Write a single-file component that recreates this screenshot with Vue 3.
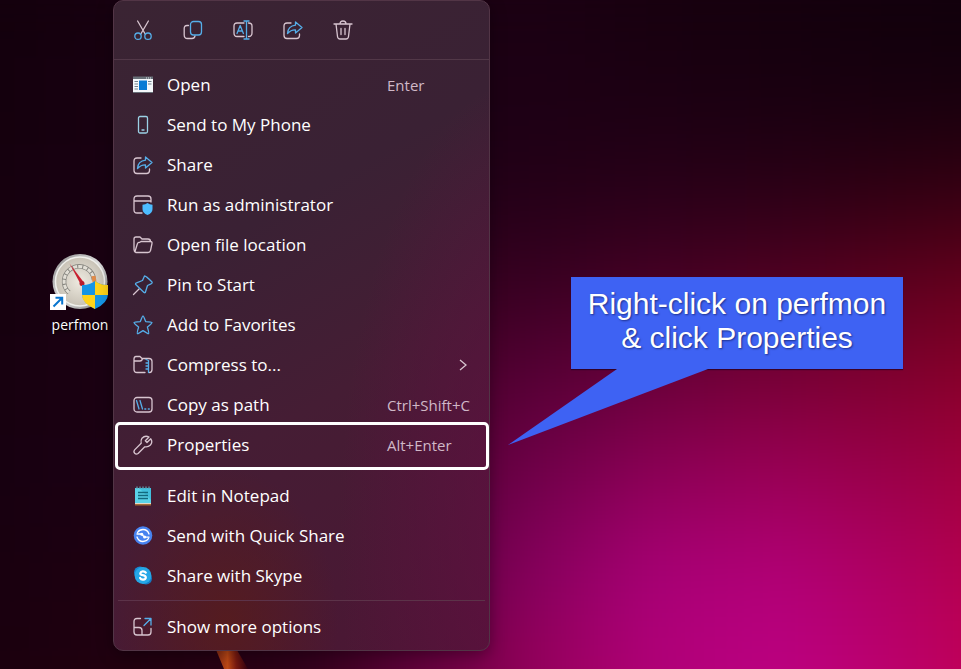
<script setup>
const tools = [
  { id: 'cut', label: 'Cut' },
  { id: 'copy', label: 'Copy' },
  { id: 'rename', label: 'Rename' },
  { id: 'share', label: 'Share' },
  { id: 'delete', label: 'Delete' },
]

const groups = [
  [
    { icon: 'open', label: 'Open', hint: 'Enter' },
    { icon: 'phone', label: 'Send to My Phone' },
    { icon: 'share', label: 'Share' },
    { icon: 'admin', label: 'Run as administrator' },
    { icon: 'folder', label: 'Open file location' },
    { icon: 'pin', label: 'Pin to Start' },
    { icon: 'star', label: 'Add to Favorites' },
    { icon: 'zip', label: 'Compress to...', submenu: true },
    { icon: 'path', label: 'Copy as path', hint: 'Ctrl+Shift+C' },
    { icon: 'wrench', label: 'Properties', hint: 'Alt+Enter', marked: true },
  ],
  [
    { icon: 'notepad', label: 'Edit in Notepad' },
    { icon: 'quick', label: 'Send with Quick Share' },
    { icon: 'skype', label: 'Share with Skype' },
  ],
  [{ icon: 'more', label: 'Show more options' }],
]

// Colour field of the wallpaper, row by row; a wide blur melts the cells together.
const field = [
  ['12000b', '15000e', '1a0012', '1c0014', '1c0014', '1c0013', '18000f', '15000d', '12000c', '10000d'],
  ['12000b', '16000f', '1a0012', '1c0014', '1c0014', '1c0014', '1b0012', '180010', '16000e', '16000c'],
  ['14000c', '170010', '1a0012', '1c0014', '1f0016', '240017', '280018', '2a0016', '300012', '380012'],
  ['14000c', '180010', '1a0012', '220016', '30001c', '3a0022', '480024', '520022', '60001e', '6c001c'],
  ['15000d', '190011', '1c0013', '28001a', '440028', '5a0038', '6e003c', '7c0038', '840030', '900028'],
  ['15000e', '190012', '1e0014', '2c001c', '4c0030', '74004c', '900058', '9c0058', '9c004a', 'a80038'],
  ['16000e', '1c0010', '200012', '300020', '54003a', '8a0060', 'aa0078', 'b20078', 'b00060', 'b80044'],
  ['18000e', '1e000e', '240010', '2c0016', '600038', '98005c', 'b20078', 'bc0082', 'bc006c', 'c4004c'],
  ['18000e', '20000e', '240010', '2c0016', '640038', '9c005c', 'b40078', 'c00084', 'c00070', 'c80050'],
]

const cells = field.flatMap((row, r) =>
  row.map((color, c) => ({ key: `${r}-${c}`, x: c * 120 - 120, y: r * 96 - 48, fill: `#${color}` })),
)

const icons = {
  cut: '<path class="w" d="M4.6 1 12.2 14M15.4 1 7.8 14"/><circle class="b" cx="5" cy="16.2" r="3.2"/><circle class="b" cx="15" cy="16.2" r="3.2"/>',
  copy: '<path class="w" d="M5.500 5.500H4Q1.200 5.500 1.200 8.500V15Q1.200 18.500 4.500 18.500H9Q11.500 18.500 12 16"/><rect class="b" x="7.500" y="1.500" width="11" height="13.500" rx="3"/>',
  rename: '<path class="w" d="M11 3H4Q1 3 1 6V13Q1 16.500 4 16.500H11M15.500 3Q19 3 19 6V13Q19 16.500 15.500 16.500"/><path class="b" d="M4 13.500 7.200 5.500 10.400 13.500M5.200 11H9.200M13.500 1V19M11 1H16M11 19H16"/>',
  share: '<path class="w" d="M8 3H4Q1 3 1 6V15.500Q1 18.500 4 18.500H13.500Q16.500 18.500 16.500 15.500V14"/><path class="b" d="M12.500 2 19 7.500 12.500 13V9.800Q8 9.600 4.500 13.500 5 6 12.500 5.200Z"/>',
  delete: '<path class="w" d="M1 4H19M7 4Q7 1 10 1T13 4M3 4 4.500 16.500Q4.800 19 7 19H13Q15.200 19 15.500 16.500L17 4M8 8.500V14.500M12 8.500V14.500"/>',
  open: '<path fill="#f4f8fb" d="M0 2H20V18H0Z"/><path fill="#687078" d="M0 1.500H20V4H0ZM0 17H20V18H0Z"/><path stroke="#dce7ed" d="M13 3H18" stroke-dasharray="1 1"/><path fill="#087bd5" d="M6 5.500H14V15H6Z"/><path stroke="#71838e" d="M1.500 6.500H5M1.500 9H5M1.500 11.500H5M1.500 14H5M15 6.500H18.500M15 9H18.500"/>',
  phone: '<rect class="p" x="5.500" y="1.500" width="9" height="16.500" rx="1.500"/><path class="p" d="M9 15H11"/>',
  admin: '<path class="w" d="M1 6H18M9 18H4Q1 18 1 15V4Q1 1 4 1H15Q18 1 18 4V7"/><path fill="#4cbcff" d="M14.500 8Q16.500 9.500 19.500 9.800V14Q19.500 18 14.500 20 9.500 18 9.500 14V9.800Q12.500 9.500 14.500 8Z"/>',
  folder: '<path class="w" d="M3 17.500Q1 17 1 14.500V4Q1 2 3 2H7L9 4H15Q17.500 4 17.500 6.500M3 17.500H15Q17 17.500 17.500 15.500L19 8.500Q19.400 6.500 17.300 6.500H8L6.500 7.500Q5 7 4.300 9L2 16.500"/>',
  pin: '<path class="w" d="M.5 19.500 6 14"/><path class="b" d="M11.500 1Q13 .8 19 7 19.700 8.200 18 8.800L14.500 10.500 12.300 17.500Q11.500 18.200 10.500 17L2.500 9.200Q2.300 8.200 3.500 7.800L9.500 5.500Z"/>',
  star: '<path class="b" d="M10 1Q10.600 1 12.700 6.600 18.800 7 19 7.500 19.200 8.200 14.400 12.100 16.200 18.200 15.600 18.600 15.100 19 10 15.600 4.900 19 4.400 18.600 3.800 18.200 5.600 12.100.8 8.200 1 7.500 1.200 7 7.300 6.600 9.400 1 10 1Z"/>',
  zip: '<path class="w" d="M12 17.500H4Q1 17.500 1 14.500V4Q1 1.500 3 1.500H7L9 3.500H16Q19 3.500 19 6.500V14.500Q19 17.500 16.500 17.500M1 6H7Q9 6 9.500 3.500"/><path class="b" d="M13 4.500 15.500 5.500V17.500M15.500 8H13M15.500 11H13M15.500 14H13"/>',
  path: '<rect class="w" x="1" y="2.500" width="18" height="14.500" rx="3"/><path class="b" d="M3.500 5.500 6 14M7 5.500 9.500 14M11.800 14H12.800M15.300 14H16.300"/>',
  wrench: '<path class="w" d="M17.800 3.800 14 7.500 12.300 5.800 16 2Q12 0 9 3.200 7.500 5.500 8.200 8.200L1.600 14.900Q.2 16.800 1.700 18.300T5.100 18.500L11.800 11.800Q15 12.500 17.400 10 20 7 17.800 3.800Z"/>',
  notepad: '<path fill="#42bfdc" d="M2 2H18V17H2Z"/><path fill="#72e6f4" d="M2 2H6L18 14V17H2Z" opacity=".5"/><path fill="#e3d8c9" d="M2 17H18V18H2Z"/><path fill="#a56b37" d="M2 18H18V19.500H2Z"/><path stroke="#12697e" stroke-width="1.300" d="M5 6.500H15M5 9.500H15M5 12.500H15"/><path stroke="#5b8a9c" stroke-width="1.500" d="M4 .5V2.500M7 .5V2.500M10 .5V2.500M13 .5V2.500M16 .5V2.500"/>',
  quick: '<circle cx="10" cy="9.500" r="9.300" fill="#4783f0"/><path fill="none" stroke="#fff" stroke-width="1.300" stroke-linecap="round" d="M4.500 6.500Q6.500 3.500 10 3.500 14.500 3.500 16 8M15.500 12.500Q13.500 15.500 10 15.500 5.500 15.500 4 11M4 8H8.500L11.500 11.200H16"/><circle cx="8.800" cy="8.300" r="1.500" fill="#fff"/><circle cx="11.600" cy="11" r="1.500" fill="#fff"/>',
  skype: '<circle cx="7" cy="6.500" r="6" fill="#1689d3"/><circle cx="13" cy="12.500" r="6" fill="#137bc4"/><circle cx="10" cy="9.500" r="8.400" fill="#25a7e7"/><path fill="none" stroke="#fff" stroke-width="2.200" stroke-linecap="round" d="M12.800 6.700Q11.800 5.200 9.800 5.300T7.300 7.300Q7.300 8.900 9.800 9.200 12.800 9.600 12.800 11.600T10 13.700Q7.900 13.600 7.100 12"/>',
  more: '<path class="w" d="M7.500 1.500H4Q1 1.500 1 4.500V15Q1 18 4 18H15Q18 18 18 15V11.500M1 10.500H6Q9 10.500 9 13.500V18"/><path class="b" d="M11 8.500 18 1.500M12 1.500H18V8"/>',
}
</script>

<template>
  <main class="desktop">
    <svg class="wallpaper" viewBox="0 0 961 669" preserveAspectRatio="none" aria-hidden="true">
      <defs>
        <filter id="melt" filterUnits="userSpaceOnUse" x="-120" y="-50" width="1200" height="870" color-interpolation-filters="sRGB">
          <feGaussianBlur stdDeviation="48" edgeMode="duplicate" />
        </filter>
        <linearGradient id="ember" x1="0" x2="1">
          <stop offset="0" stop-color="#7a2414" />
          <stop offset=".4" stop-color="#c04a16" />
          <stop offset=".65" stop-color="#7a1a10" />
          <stop offset="1" stop-color="#300010" />
        </linearGradient>
      </defs>
      <g filter="url(#melt)">
        <rect v-for="cell in cells" :key="cell.key" :x="cell.x" :y="cell.y" width="121" height="97" :fill="cell.fill" />
      </g>
      <path fill="url(#ember)" d="M214 645 224 669H248L234 645Z" />
    </svg>

    <a class="shortcut" href="#perfmon">
      <svg viewBox="0 0 60 60" aria-hidden="true">
        <defs>
          <radialGradient id="dial"><stop offset="0" stop-color="#eeeae0" /><stop offset="1" stop-color="#c8c2b6" /></radialGradient>
          <linearGradient id="rim" x2="1" y2="1"><stop stop-color="#888" /><stop offset=".5" stop-color="#ddd" /><stop offset="1" stop-color="#777" /></linearGradient>
        </defs>
        <circle cx="30" cy="28.500" r="27.500" fill="url(#rim)" />
        <circle cx="30" cy="28.500" r="24.500" fill="url(#dial)" stroke="#f0f0ec" stroke-width="1.500" />
        <path fill="none" stroke="#86857f" stroke-width="4.500" d="M19 39.500A15 15 0 1 1 44 27" />
        <path fill="none" stroke="#e2dfd6" stroke-width="3" stroke-dasharray="4 1" d="M19 39.500A15 15 0 1 1 44 27" />
        <path stroke="#e08a48" stroke-width="4" d="M43.500 23 44.500 29" />
        <path fill="#c82030" d="M19.500 10.500 33.500 29 30.500 31Z" />
        <circle cx="32" cy="30.500" r="2.500" fill="#b81c2c" />
        <path fill="#1595e5" d="M45 28Q51 32.500 58 32V41Q58 50 45 56 32 50 32 41V32Q39 32.500 45 28Z" />
        <path fill="#ffd31a" d="M45 28Q51 32.500 58 32V42H45ZM32 42H45V56Q32 50 32 42Z" />
        <path fill="#fff" d="M0 41H16V57H0Z" />
        <path fill="none" stroke="#0875cf" stroke-width="2" d="M3.500 53.500 12 45M5.500 44.800H12.200V51.500" />
      </svg>
      <span>perfmon</span>
    </a>

    <nav class="menu" aria-label="File actions">
      <div class="toolbar">
        <button v-for="tool in tools" :key="tool.id" type="button" :aria-label="tool.label">
          <svg class="icon" viewBox="0 0 20 20" aria-hidden="true" v-html="icons[tool.id]" />
        </button>
      </div>
      <ul v-for="(group, index) in groups" :key="index" class="group">
        <li v-for="item in group" :key="item.label" :class="{ marked: item.marked }">
          <button type="button" class="item">
            <svg class="icon" viewBox="0 0 20 20" aria-hidden="true" v-html="icons[item.icon]" />
            <span class="label">{{ item.label }}</span>
            <span v-if="item.hint" class="hint">{{ item.hint }}</span>
            <svg v-if="item.submenu" class="chevron" viewBox="0 0 8 12" aria-hidden="true"><path d="M1 1 7 6 1 11" /></svg>
          </button>
        </li>
      </ul>
    </nav>

    <aside class="callout">
      <p>Right-click on perfmon<br />&amp; click Properties</p>
      <svg class="tail" viewBox="0 0 202 78" aria-hidden="true"><path d="M110 0 1 76 201 0Z" /></svg>
    </aside>
  </main>
</template>

<style>
body {
  margin: 0;
  background: #16000f;
}
</style>

<style scoped>
.desktop {
  position: relative;
  display: grid;
  grid-template-columns: 113px 377px minmax(0, 1fr);
  align-items: start;
  min-height: 100vh;
  overflow: hidden;
  font-family: "Open Sans", "Noto Sans", sans-serif;
}

.wallpaper {
  position: absolute;
  inset: 0;
  width: 100%;
  height: 100%;
}

.shortcut {
  position: relative;
  display: flex;
  flex-direction: column;
  align-items: center;
  width: 60px;
  margin: 253px 0 0 50px;
  color: #fff;
  font-size: 14px;
  line-height: 20px;
  text-decoration: none;
  text-shadow: 1px 1px 2px #000;
}

.shortcut svg {
  width: 60px;
  height: 60px;
  margin-bottom: 2px;
}

.menu {
  position: relative;
  box-sizing: border-box;
  padding-bottom: 3px;
  border: 1px solid #523546;
  border-radius: 10px;
  background:
    radial-gradient(ellipse 30% 24% at 30% 96%, rgba(88, 28, 26, 0.8), transparent),
    radial-gradient(ellipse 50% 70% at 110% 82%, rgba(98, 14, 66, 0.8), transparent),
    linear-gradient(150deg, #3a2433 0%, #3a2134 35%, #451d34 60%, #4c1634 100%);
  box-shadow: 0 4px 16px rgba(0, 0, 0, 0.35);
}

button {
  margin: 0;
  padding: 0;
  border: 0;
  color: inherit;
  background: none;
  font: inherit;
}

.toolbar {
  display: flex;
  gap: 10px;
  height: 58px;
  padding-left: 9px;
  border-bottom: 1px solid #523848;
}

.toolbar button {
  display: grid;
  place-items: center;
  width: 40px;
}

.icon {
  flex: none;
  width: 20px;
  height: 20px;
  overflow: visible;
}

.icon :deep(.w),
.icon :deep(.b),
.icon :deep(.p) {
  fill: none;
  stroke: #d8c5d0;
  stroke-width: 1.3;
  stroke-linecap: round;
  stroke-linejoin: round;
}

.icon :deep(.b) {
  stroke: #55aee9;
}

.icon :deep(.p) {
  stroke: #9bd1e5;
}

.group {
  margin: 0 4px;
  padding: 5px 0 4px;
  list-style: none;
}

.group + .group {
  padding-top: 6px;
  border-top: 1px solid #5c3349;
}

.group:last-child {
  padding-bottom: 0;
}

.group li {
  position: relative;
}

.item {
  display: grid;
  grid-template-columns: 20px 206px minmax(0, 1fr);
  column-gap: 14px;
  align-items: center;
  width: 100%;
  height: 40px;
  padding-left: 15px;
  color: #fff;
  font-size: 17px;
  line-height: 24px;
  text-align: left;
}

.hint {
  color: #d0b8c7;
  font-size: 15px;
}

.chevron {
  justify-self: end;
  width: 8px;
  height: 12px;
  margin-right: 18px;
}

.chevron path {
  fill: none;
  stroke: #d8c5d0;
  stroke-width: 1.3;
}

.marked::after {
  position: absolute;
  inset: -3px -4px -5px -3px;
  border: 3px solid #fff;
  border-radius: 5px;
  content: "";
  pointer-events: none;
}

.callout {
  position: relative;
  box-sizing: border-box;
  min-height: 92px;
  margin: 277px 58px 0 81px;
  padding-top: 10px;
  color: #fff;
  background: #3e62f3;
  box-shadow: 0 1px 1px rgba(20, 0, 30, 0.6);
  font-family: "Liberation Sans", Arial, sans-serif;
  font-size: 30px;
  line-height: 34px;
  text-align: center;
  text-shadow: 1px 1px 2px rgba(0, 0, 40, 0.5);
}

.callout p {
  margin: 0;
}

.tail {
  position: absolute;
  top: 100%;
  left: -64px;
  width: 202px;
  height: 78px;
  fill: #3e62f3;
}
</style>
